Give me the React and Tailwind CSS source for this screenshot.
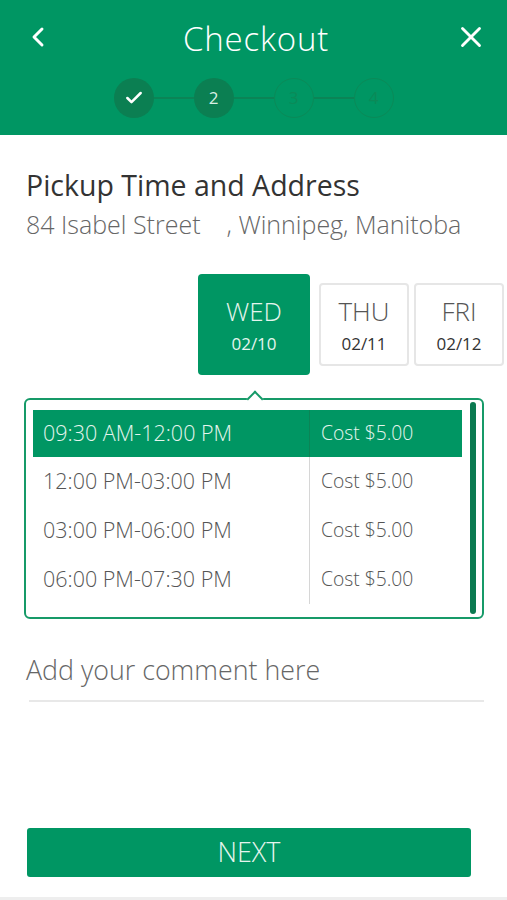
import { ChevronLeft, X, Check } from "lucide-react";

const days = [
  { day: "WED", date: "02/10", active: true },
  { day: "THU", date: "02/11" },
  { day: "FRI", date: "02/12" },
];

const slots = [
  { time: "09:30 AM-12:00 PM", cost: "Cost $5.00", active: true },
  { time: "12:00 PM-03:00 PM", cost: "Cost $5.00" },
  { time: "03:00 PM-06:00 PM", cost: "Cost $5.00" },
  { time: "06:00 PM-07:30 PM", cost: "Cost $5.00" },
];

const Step = ({ children, done }) => (
  <div
    className={`w-10 h-10 rounded-full flex items-center justify-center text-[17px] ${
      done ? "bg-[#0b7f52] text-[#d8efe4]" : "border border-[#0b8a58] text-[#0b8a58]"
    }`}
  >
    {children}
  </div>
);

const Line = () => <div className="w-10 h-[2px] bg-[#0b8456]" />;

export default function App() {
  return (
    <div
      className="w-[507px] h-[900px] bg-white flex flex-col overflow-hidden"
      style={{ fontFamily: "'Open Sans', sans-serif" }}
    >
      <header className="h-[135px] bg-[#009663] flex flex-col">
        <div className="h-[78px] flex items-center justify-between pl-[22px] pr-[19px] pt-[2px]">
          <ChevronLeft className="w-[32px] h-[32px] text-white -mt-[6px]" strokeWidth={2.2} />
          <h1 className="text-[33px] font-light text-white tracking-wide -mt-[2px] ml-[4px]">Checkout</h1>
          <X className="w-[34px] h-[34px] text-white -mt-[6px]" strokeWidth={2} />
        </div>
        <div className="flex items-center justify-center">
          <Step done>
            <Check className="w-5 h-5 text-white" strokeWidth={3} />
          </Step>
          <Line />
          <Step done>2</Step>
          <Line />
          <Step>3</Step>
          <Line />
          <Step>4</Step>
        </div>
      </header>

      <div className="pl-[26px] pt-[33px]">
        <h2 className="text-[28.5px] leading-[34px] text-[#333]">Pickup Time and Address</h2>
        <p className="text-[25px] leading-[34px] font-light text-[#666] mt-[5px]">
          84 Isabel Street&nbsp;&nbsp;&nbsp; , Winnipeg, Manitoba
        </p>
      </div>

      <div className="flex justify-end items-center pr-[3px] mt-[33px]">
        {days.map((d) =>
          d.active ? (
            <div
              key={d.day}
              className="w-[112px] h-[101px] rounded-[4px] bg-[#009663] flex flex-col items-center justify-center mr-[4px]"
            >
              <div className="text-[26px] font-light text-[#e5f5ee] leading-none">{d.day}</div>
              <div className="text-[17px] text-[#e5f5ee] mt-[11px] leading-none">{d.date}</div>
            </div>
          ) : (
            <div
              key={d.day}
              className="w-[90px] h-[83px] rounded-[4px] border-2 border-[#e6e6e6] bg-white flex flex-col items-center justify-center ml-[5px]"
            >
              <div className="text-[26px] font-light text-[#555] leading-none">{d.day}</div>
              <div className="text-[17px] text-[#333] mt-[11px] leading-none">{d.date}</div>
            </div>
          )
        )}
      </div>

      <div className="relative ml-[24px] mt-[23px] w-[460px] h-[221px] border-2 border-[#169a68] rounded-[6px] flex pl-[7px] pt-[10px]">
        <div className="absolute -top-[7px] left-[223px] w-[12px] h-[12px] bg-white border-l-2 border-t-2 border-[#169a68] rotate-45" />
        <div className="w-[429px] flex flex-col">
          {slots.map((s, i) => (
            <div
              key={s.time}
              className={`flex ${i === 0 ? "h-[47px]" : "h-[49px]"} ${s.active ? "bg-[#009663] text-[#e5f5ee]" : "text-[#555]"}`}
            >
              <div
                className={`w-[277px] flex items-center pl-[10px] text-[21.5px] font-light border-r ${
                  s.active ? "border-[#0b8456]" : "border-[#d6d6d6]"
                }`}
              >
                {s.time}
              </div>
              <div className="flex-1 flex items-center pl-[11px] text-[19.3px] font-light">{s.cost}</div>
            </div>
          ))}
        </div>
        <div className="ml-[8px] -mt-[8px] w-[6px] h-[212px] rounded-full bg-[#0b7a50]" />
      </div>

      <div className="ml-[26px] mt-[33px] w-[458px]">
        <div className="text-[26.8px] font-light text-[#666] leading-[36px]">Add your comment here</div>
        <div className="mt-[12px] ml-[3px] h-[2px] bg-[#e8e8e8]" />
      </div>

      <div className="flex-1" />

      <button className="ml-[27px] w-[444px] h-[49px] rounded-[3px] bg-[#009663] text-[27px] font-light text-[#e5f5ee] flex items-center justify-center">
        NEXT
      </button>

      <div className="mt-[20px] h-[3px] bg-[#eeeeee]" />
    </div>
  );
}
